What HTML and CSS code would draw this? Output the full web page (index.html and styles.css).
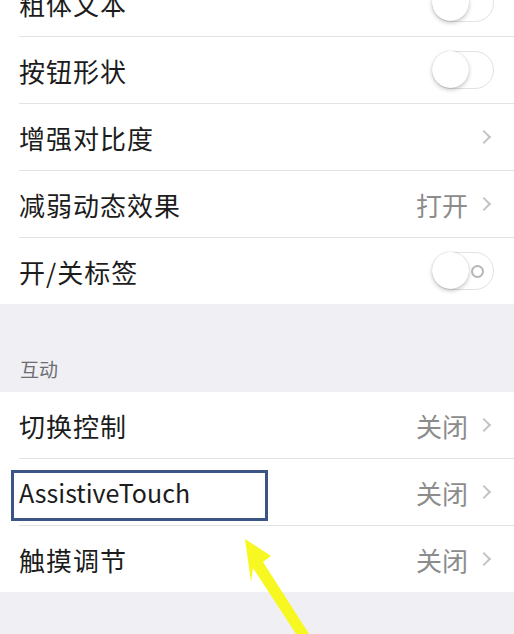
FILE: index.html
```html
<!DOCTYPE html>
<html lang="zh">
<head>
<meta charset="utf-8">
<link rel="stylesheet" href="styles.css">
</head>
<body>
<div class="page">
  <div class="group first">
    <div class="row"><span class="label">粗体文本</span><span class="toggle"><span class="knob"></span></span></div>
    <div class="row"><span class="label">按钮形状</span><span class="toggle"><span class="knob"></span></span></div>
    <div class="row"><span class="label">增强对比度</span><span class="accessory"><span class="chev"></span></span></div>
    <div class="row"><span class="label">减弱动态效果</span><span class="accessory"><span class="value">打开</span><span class="chev"></span></span></div>
    <div class="row last"><span class="label">开/关标签</span><span class="toggle labels"><span class="knob"></span><span class="ring"></span></span></div>
  </div>
  <div class="section-header">互动</div>
  <div class="group">
    <div class="row"><span class="label">切换控制</span><span class="accessory"><span class="value">关闭</span><span class="chev"></span></span></div>
    <div class="row"><span class="label latin">AssistiveTouch</span><span class="accessory"><span class="value">关闭</span><span class="chev"></span></span></div>
    <div class="row last"><span class="label">触摸调节</span><span class="accessory"><span class="value">关闭</span><span class="chev"></span></span></div>
  </div>
  <div class="footer"></div>
  <div class="highlight"></div>
  <svg class="arrow" width="514" height="634" viewBox="0 0 514 634">
    <polygon points="245,539 271,556 263,562 313,640 300,640 253,568 251,582" fill="#f7f722"/>
  </svg>
</div>
</body>
</html>
```
FILE: styles.css
```css
html, body {
  margin: 0;
  padding: 0;
  background: #efeff4;
}
body {
  width: 514px;
  height: 634px;
  overflow: hidden;
  font-family: "Noto Sans CJK SC", "Noto Sans", sans-serif;
}
.page {
  position: relative;
  width: 514px;
  height: 634px;
  overflow: hidden;
}
.group {
  background: #fff;
}
.group.first {
  margin-top: -30px;
}
.row {
  height: 67px;
  box-sizing: border-box;
  margin-left: 19px;
  padding-right: 21px;
  border-bottom: 1px solid #e3e3e6;
  display: flex;
  align-items: center;
  justify-content: space-between;
}
.row.last {
  border-bottom: none;
  height: 66px;
}
.label {
  font-size: 26px;
  color: #1c1c1c;
  letter-spacing: 1px;
}
.label.latin {
  font-size: 25px;
  letter-spacing: 0;
}
.accessory {
  display: flex;
  align-items: center;
  gap: 11px;
}
.value {
  font-size: 26px;
  color: #8c8c8c;
  letter-spacing: 0;
}
.chev {
  width: 8px;
  height: 8px;
  border-top: 2px solid #c4c4c8;
  border-right: 2px solid #c4c4c8;
  transform: rotate(45deg);
  margin-right: 4px;
}
.toggle {
  position: relative;
  width: 60px;
  height: 36px;
  border: 1.5px solid #e2e2e2;
  border-radius: 20px;
  background: #fff;
  margin-right: -1px;
}
.knob {
  position: absolute;
  left: -1px;
  top: -1px;
  width: 37px;
  height: 37px;
  border-radius: 50%;
  background: #fff;
  box-shadow: 0 2px 4px rgba(0,0,0,0.22), 0 0 1px rgba(0,0,0,0.2);
}
.ring {
  position: absolute;
  right: 9px;
  top: 12px;
  width: 9px;
  height: 9px;
  border: 2px solid #b5b5b5;
  border-radius: 50%;
}
.section-header {
  height: 88px;
  box-sizing: border-box;
  padding: 0 0 10px 20px;
  display: flex;
  align-items: flex-end;
  font-size: 19px;
  color: #6d6d72;
}
.footer {
  height: 60px;
}
.highlight {
  position: absolute;
  left: 11px;
  top: 470px;
  width: 251px;
  height: 45px;
  border: 3px solid #3b5586;
}
.arrow {
  position: absolute;
  left: 0;
  top: 0;
  pointer-events: none;
  filter: blur(0.6px);
}
```
